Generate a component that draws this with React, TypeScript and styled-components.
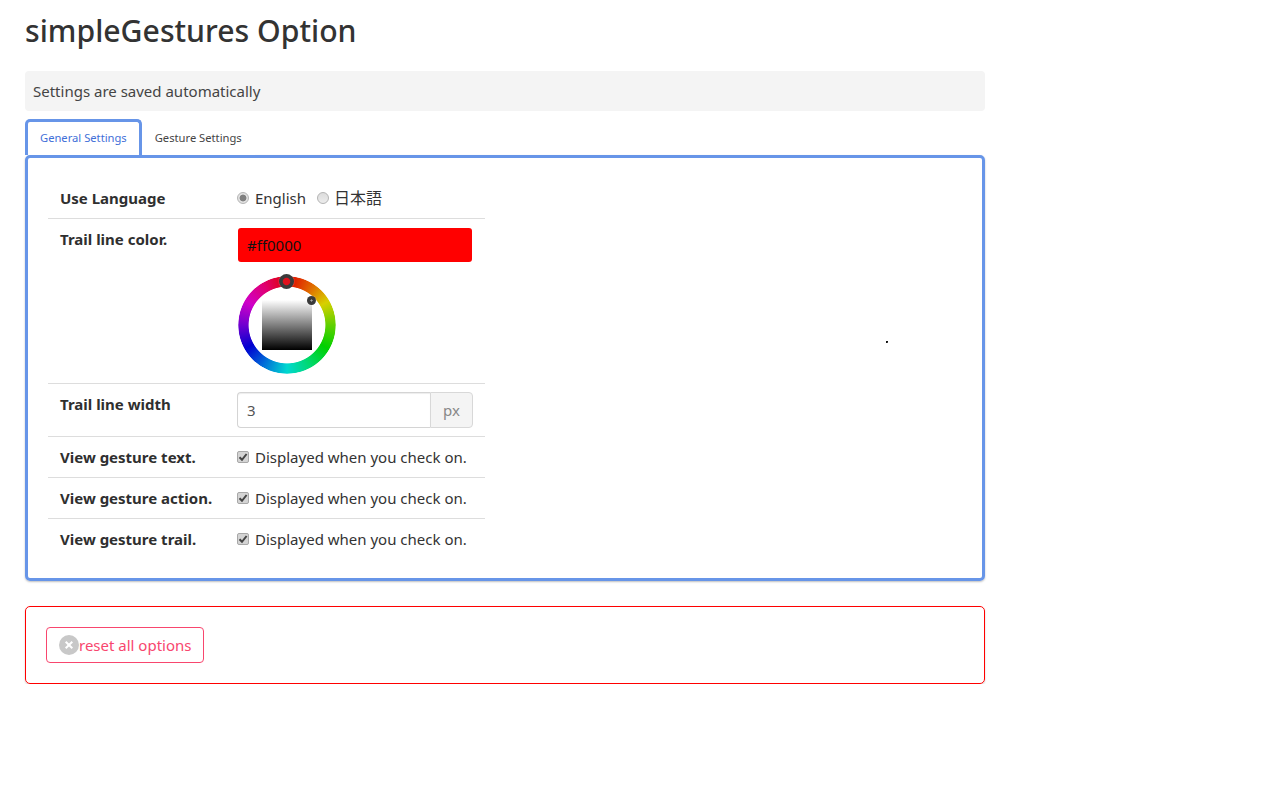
import styled, { createGlobalStyle } from 'styled-components';

const GlobalStyle = createGlobalStyle`
	html, body {
		margin: 0;
		background: #fff;
	}
	body {
		font-family: 'Noto Sans', 'Open Sans', 'Noto Sans CJK JP', sans-serif;
		font-size: 16px;
		line-height: 1.5;
		color: #333;
	}
	* {
		box-sizing: border-box;
	}
`;

const Page = styled.div`
	width: 960px;
	margin-left: 25px;
	padding-top: 11px;
`;

const Title = styled.h1`
	margin: 0 0 21px;
	font-size: 30.2px;
	font-weight: 500;
	line-height: 39px;
	color: #333;
`;

const Notice = styled.div`
	height: 40px;
	padding: 0 8px;
	display: flex;
	align-items: center;
	background: #f4f4f4;
	border-radius: 4px;
	font-size: 15px;
	color: #444;
	margin-bottom: 8px;
`;

const Tabs = styled.div`
	display: flex;
	height: 36px;
`;

const Tab = styled.div<{ $active?: boolean }>`
	height: 36px;
	display: flex;
	align-items: center;
	padding: 0 ${({ $active }) => ($active ? '12px' : '10px')};
	font-size: 11.2px;
	white-space: nowrap;
	margin-bottom: -1px;
	position: relative;
	z-index: 1;
	color: ${({ $active }) => ($active ? '#3f6fd8' : '#444')};
	background: #fff;
	border: 3px solid ${({ $active }) => ($active ? '#6795e8' : 'transparent')};
	border-bottom: none;
	border-radius: 5px 5px 0 0;
`;

const Panel = styled.div`
	position: relative;
	height: 426px;
	border: 3px solid #6795e8;
	border-radius: 5px;
	padding: 20px;
	margin-bottom: 25px;
	box-shadow: 0 1px 2px rgba(0, 0, 0, 0.25);
`;

const Speck = styled.div`
	position: absolute;
	left: 858px;
	top: 183px;
	width: 2px;
	height: 2px;
	background: linear-gradient(135deg, #111 50%, #777);
`;

const Table = styled.div`
	width: 437px;
`;

const Row = styled.div<{ $height: number }>`
	display: grid;
	grid-template-columns: 177px 1fr;
	height: ${({ $height }) => $height}px;
	padding: 8px 12px 0;
	border-top: 1px solid #ddd;

	&:first-child {
		border-top: none;
	}
`;

const Label = styled.div`
	font-size: 15px;
	font-weight: 700;
	line-height: 24px;
	color: #2f2f2f;
`;

const Options = styled.div`
	display: flex;
	align-items: center;
	height: 24px;
	font-size: 15px;
	white-space: nowrap;
`;

const OptionLabel = styled.label`
	display: flex;
	align-items: center;
	margin-right: 11px;
`;

const CjkText = styled.span`
	font-size: 16px;
	margin-left: -1px;
`;

const Radio = styled.span<{ $checked?: boolean }>`
	width: 12px;
	height: 12px;
	margin-right: 6px;
	border-radius: 50%;
	border: 1px solid #b4b4b4;
	background: ${({ $checked }) =>
		$checked
			? 'radial-gradient(circle, #808080 0 3px, #e2e2e2 3.8px)'
			: 'linear-gradient(#dcdcdc, #ececec)'};
`;

const Check = styled.span`
	width: 12px;
	height: 12px;
	margin-right: 6px;
	border-radius: 2px;
	border: 1px solid #a8a8a8;
	background: #d4d4d4;
	display: flex;
	align-items: center;
	justify-content: center;
`;

const ColorInput = styled.div`
	height: 34px;
	width: 234px;
	margin: 1px 0 0 1px;
	background: #f00;
	border-radius: 3px;
	padding-left: 9px;
	font-size: 15px;
	line-height: 35px;
	color: #111;
`;

const Wheel = styled.div`
	position: relative;
	width: 100px;
	height: 100px;
	margin-top: 13px;
`;

const Ring = styled.div`
	position: absolute;
	inset: 1px;
	border-radius: 50%;
	background: conic-gradient(
		#e00000,
		#e06000 30deg,
		#d8d000 60deg,
		#60d000 90deg,
		#00d000 120deg,
		#00d870 150deg,
		#00d8d0 180deg,
		#0070d8 210deg,
		#0000d0 240deg,
		#7000d0 270deg,
		#d000c8 300deg,
		#e00070 330deg,
		#e00000
	);
	mask: radial-gradient(circle, transparent 38px, #000 38.8px, #000 48.2px, rgba(0, 0, 0, 0.25) 49px);
`;

const Square = styled.div`
	position: absolute;
	left: 25px;
	top: 25px;
	width: 50px;
	height: 50px;
	background: linear-gradient(#fff, #000);
`;

const Marker = styled.div<{ $size: number; $x: number; $y: number; $dot: string; $stop: number }>`
	position: absolute;
	width: ${({ $size }) => $size}px;
	height: ${({ $size }) => $size}px;
	left: ${({ $x }) => $x}px;
	top: ${({ $y }) => $y}px;
	border-radius: 50%;
	background: radial-gradient(
		circle,
		${({ $dot }) => $dot} 0 ${({ $stop }) => $stop}%,
		#3a3a3a ${({ $stop }) => $stop + 10}%
	);
	box-shadow: 0 0 1px rgba(255, 255, 255, 0.8);
`;

const InputGroup = styled.div`
	display: flex;
	width: 236px;
	height: 36px;
`;

const NumberField = styled.div`
	flex: 1;
	border: 1px solid #d4d4d4;
	border-right: none;
	border-radius: 4px 0 0 4px;
	padding-left: 9px;
	font-size: 15px;
	line-height: 35px;
	color: #555;
	box-shadow: inset 0 1px 1px rgba(0, 0, 0, 0.075);
`;

const Addon = styled.div`
	width: 43px;
	border: 1px solid #d8d8d8;
	border-radius: 0 4px 4px 0;
	background: #f4f4f4;
	text-align: center;
	font-size: 15px;
	line-height: 34px;
	color: #888;
`;

const DangerPanel = styled.div`
	height: 78px;
	border: 1px solid #f00;
	border-radius: 5px;
	padding: 20px;
	box-shadow: 0 1px 2px rgba(0, 0, 0, 0.2);
`;

const ResetButton = styled.button`
	height: 36px;
	width: 158px;
	display: flex;
	align-items: center;
	padding: 0 0 0 12px;
	background: #fff;
	border: 1px solid #f8466e;
	border-radius: 4px;
	color: #f8466e;
	font-family: inherit;
	font-size: 15px;
	white-space: nowrap;
`;

const Cross = styled.svg`
	flex: none;
	width: 20px;
	height: 20px;
`;

function CheckOption() {
	return (
		<Options>
			<Check>
				<svg width="10" height="10" viewBox="0 0 10 10">
					<path d="M1.5 5.2 4 7.8 8.6 2" fill="none" stroke="#444" strokeWidth="2" />
				</svg>
			</Check>
			Displayed when you check on.
		</Options>
	);
}

export default function App() {
	return (
		<Page>
			<GlobalStyle />
			<Title>simpleGestures Option</Title>
			<Notice>Settings are saved automatically</Notice>
			<Tabs>
				<Tab $active>General Settings</Tab>
				<Tab>Gesture Settings</Tab>
			</Tabs>
			<Panel>
				<Speck />
				<Table>
					<Row $height={40}>
						<Label>Use Language</Label>
						<Options>
							<OptionLabel>
								<Radio $checked />
								English
							</OptionLabel>
							<OptionLabel>
								<Radio />
								<CjkText>日本語</CjkText>
							</OptionLabel>
						</Options>
					</Row>
					<Row $height={165}>
						<Label>Trail line color.</Label>
						<div>
							<ColorInput>#ff0000</ColorInput>
							<Wheel>
								<Ring />
								<Square />
								<Marker $size={15} $x={42} $y={-1} $dot="#e0101c" $stop={30} />
								<Marker $size={9} $x={70} $y={21} $dot="#aaa" $stop={12} />
							</Wheel>
						</div>
					</Row>
					<Row $height={53}>
						<Label>Trail line width</Label>
						<InputGroup>
							<NumberField>3</NumberField>
							<Addon>px</Addon>
						</InputGroup>
					</Row>
					<Row $height={41}>
						<Label>View gesture text.</Label>
						<CheckOption />
					</Row>
					<Row $height={41}>
						<Label>View gesture action.</Label>
						<CheckOption />
					</Row>
					<Row $height={41}>
						<Label>View gesture trail.</Label>
						<CheckOption />
					</Row>
				</Table>
			</Panel>
			<DangerPanel>
				<ResetButton>
					<Cross viewBox="0 0 20 20">
						<circle cx="10" cy="10" r="10" fill="#c8c8c8" />
						<path d="M6.7 6.7 13.3 13.3M13.3 6.7 6.7 13.3" stroke="#fff" strokeWidth="2" />
					</Cross>
					reset all options
				</ResetButton>
			</DangerPanel>
		</Page>
	);
}
